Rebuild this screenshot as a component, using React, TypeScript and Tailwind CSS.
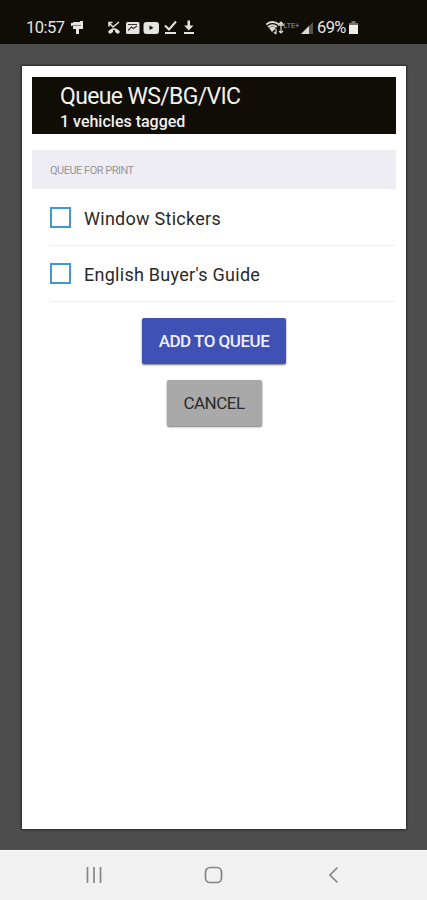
import React, { useState } from "react";

const StatusBar: React.FC = () => (
  <div className="flex h-11 shrink-0 items-end bg-[#100c06] pb-2 pl-[26px] text-[#e6e4e0]">
    <span className="w-[45px] whitespace-nowrap text-[16.500px] leading-[16px] tracking-[-0.5px]">10:57</span>
    <svg width="124" height="16" viewBox="0 0 124 16" fill="currentColor" className="shrink-0">
      {/* paint roller */}
      <path d="M2 2h7V1h3v8H8v5H5V9H2V6H0V3h2z" />
      <path d="M1 5.5h9" stroke="#8b8984" strokeWidth="1" />
      {/* missed call */}
      <path d="M38 3l4 4 6-5M38 6.500V2.500h3.500" fill="none" stroke="currentColor" strokeWidth="1.6" />
      <path d="M37 12c3-5 9-5 12 0l-2 2-3-2v-2h-2v2l-3 2z" />
      {/* picture */}
      <rect x="55" y="2" width="13.5" height="12" rx="1.5" />
      <path d="M57 10.500l3.500-3.500 2 1.500 3.500-2.500M57 4.500h9" fill="none" stroke="#38342e" strokeWidth="1.1" />
      {/* video */}
      <rect x="72.500" y="2" width="15.500" height="12" rx="3" />
      <path d="M78.500 5.500v4.500l4-2.200z" fill="#100c06" />
      {/* check */}
      <path d="M94 5.500l4 4 7-8" fill="none" stroke="currentColor" strokeWidth="2" />
      <path d="M94 12h11v2H94z" />
      {/* download */}
      <path d="M116.5 0.500h2.500v5h3.500l-4.700 5-4.700-5h3.400zM113 12h10v2H113z" />
    </svg>
    <svg width="48" height="16" viewBox="0 0 48 16" className="ml-[71px] shrink-0" fill="none">
      <path d="M0 4.500q6.500-5 13 0M2 7q4.500-3.500 9 0" stroke="#dedcd8" strokeWidth="1.8" />
      <path d="M3 8q4-3 7 0l-4 4z" fill="#dedcd8" />
      <path d="M10 9v5M8 12l2 2M15 2v11M13 4l2-2 2 2M13 11l2 2 2-2" stroke="#dedcd8" strokeWidth="1.2" />
      <path d="M12 5h6" stroke="#dedcd8" strokeWidth="1.5" />
      <text x="17.500" y="7.500" fontFamily="Roboto, sans-serif" fontWeight="700" fontSize="7" textLength="15.500" fill="#77736d">LTE+</text>
      <path d="M35 14L47 2v12z" fill="#55524c" />
      <path d="M35 14l8-8v8z" fill="#dedcd8" />
    </svg>
    <span className="ml-[3px] w-[31px] whitespace-nowrap text-[16.500px] leading-[16px] tracking-[-0.6px]">69%</span>
    <svg width="9" height="15" viewBox="0 0 9 15" className="ml-px mb-px shrink-0">
      <path d="M2.500 1h4v2H9v3H0V3h2.500z" fill="#77746e" />
      <path d="M0 5h9v9H0z" fill="#eeece8" />
    </svg>
  </div>
);

interface QueueOptionProps {
  label: string;
}

const QueueOption: React.FC<QueueOptionProps> = ({ label }) => {
  const [checked, setChecked] = useState(false);

  return (
    <label className="ml-[18px] mr-px flex h-14 cursor-pointer items-center border-b border-[#eeeeee]">
      <input
        type="checkbox"
        checked={checked}
        onChange={() => setChecked(!checked)}
        className="size-[21px] shrink-0 appearance-none border-2 border-[#3f98d2] bg-white checked:bg-[#3f98d2]"
      />
      <span className="ml-[13px] whitespace-nowrap pt-[2px] text-[18px] tracking-[0.27px] text-[#292929]">
        {label}
      </span>
    </label>
  );
};

const NavBar: React.FC = () => (
  <div className="flex h-[50px] shrink-0 items-center justify-center border-t border-[#fbfbfb] bg-[#f1f1f1] pb-[2px]">
    <svg width="256" height="20" viewBox="0 0 256 20" fill="none" stroke="#858585" strokeWidth="1.7">
      <path d="M1.500 2v16M8 2v16M14.500 2v16" />
      <rect x="119.500" y="2.500" width="16" height="15" rx="4.500" />
      <path d="M251.500 2.500L244 10l7.500 7.500" />
    </svg>
  </div>
);

const App: React.FC = () => {
  return (
    <div className="flex h-[900px] w-[427px] flex-col overflow-hidden bg-[#4d4d4d] font-['Roboto',sans-serif]">
      <StatusBar />
      <div className="flex min-h-0 flex-1 pb-[21px] pl-[22px] pr-[21px] pt-[22px]">
        <main className="flex flex-1 flex-col bg-white px-[10px] pt-[11px] shadow-[0_0_2px_1px_#292929]">
          <header className="h-[57px] shrink-0 bg-[#100c06] pl-7 pt-[6px] text-[#f2f1ee]">
            <h1 className="whitespace-nowrap text-[23px] leading-[27px] tracking-[-0.65px]">Queue WS/BG/VIC</h1>
            <p className="whitespace-nowrap text-[16px] font-medium leading-[24px]">1 vehicles tagged</p>
          </header>
          <h2 className="mt-4 flex h-[39px] shrink-0 items-center bg-[#eeedf3] pl-[18px] pt-[3px] text-[11px] tracking-[-0.5px] text-[#969599]">
            QUEUE FOR PRINT
          </h2>
          <div className="mt-px">
            <QueueOption label="Window Stickers" />
            <QueueOption label="English Buyer's Guide" />
          </div>
          <div className="mt-4 flex flex-col items-center gap-4">
            <button className="h-[46px] w-[144px] rounded-[2px] bg-[#3f51b5] pt-[2px] text-[17px] font-medium tracking-[-0.5px] text-[#eef0fa] shadow-[0_1px_2px_#777777]">
              ADD TO QUEUE
            </button>
            <button className="h-[46px] w-[95px] rounded-[2px] bg-[#a9a9a9] pt-[2px] text-[17px] tracking-[-0.5px] text-[#292929] shadow-[0_1px_2px_#777777]">
              CANCEL
            </button>
          </div>
        </main>
      </div>
      <NavBar />
    </div>
  );
};

export default App;
